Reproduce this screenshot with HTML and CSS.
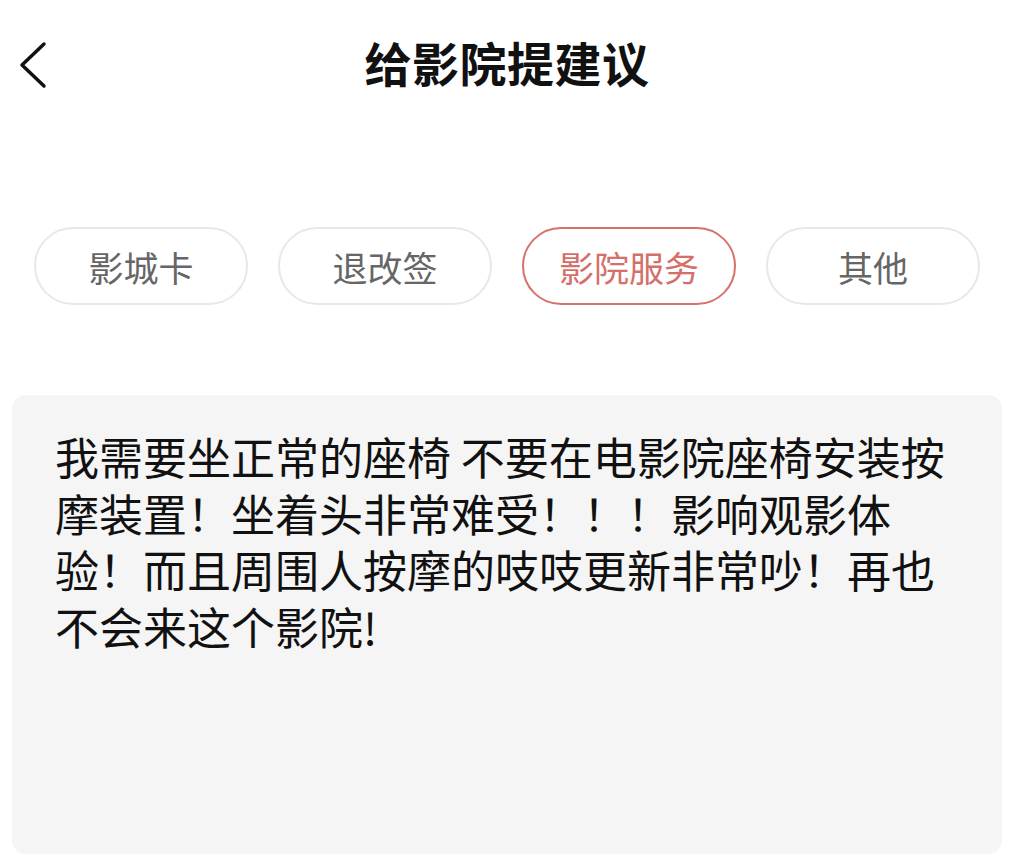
FILE: index.html
```html
<!DOCTYPE html>
<html lang="zh-CN">
<head>
    <meta charset="UTF-8">
    <meta name="viewport" content="width=device-width, initial-scale=1.0">
    <title>给影院提建议</title>
    <link rel="stylesheet" href="styles.css">
</head>
<body>
    <div class="header">
        <button class="back" aria-label="返回">
            <svg width="30" height="48" viewBox="0 0 30 48">
                <path d="M26 3 L4 24 L26 45" fill="none" stroke="#111" stroke-width="3.5" stroke-linecap="round" stroke-linejoin="round"/>
            </svg>
        </button>
        <h1>给影院提建议</h1>
    </div>

    <div class="tags">
        <span class="tag">影城卡</span>
        <span class="tag">退改签</span>
        <span class="tag active">影院服务</span>
        <span class="tag">其他</span>
    </div>

    <div class="feedback">我需要坐正常的座椅 不要在电影院座椅安装按摩装置！坐着头非常难受！！！影响观影体验！而且周围人按摩的吱吱更新非常吵！再也不会来这个影院!</div>
</body>
</html>
```

FILE: styles.css
```css
body, html {
    margin: 0;
    padding: 0;
    background-color: #ffffff;
    font-family: "Noto Sans CJK SC", "Noto Sans", sans-serif;
    color: #111;
}

.header {
    position: relative;
    height: 132px;
    display: flex;
    align-items: center;
    justify-content: center;
}

.header h1 {
    margin: 0 14px 10px 0;
    font-size: 47px;
    font-weight: bold;
    color: #111;
    letter-spacing: 0.5px;
}

.back {
    position: absolute;
    left: 18px;
    top: 41px;
    padding: 0;
    border: none;
    background: none;
}

.back svg {
    display: block;
}

.tags {
    display: flex;
    gap: 30px;
    padding: 0 34px;
    margin-top: 95px;
}

.tag {
    width: 210px;
    height: 74px;
    display: flex;
    align-items: center;
    justify-content: center;
    border: 2px solid #e8e8e8;
    border-radius: 40px;
    font-size: 35px;
    color: #666;
}

.tag.active {
    border-color: #d8716c;
    color: #d46f6a;
}

.feedback {
    margin: 90px 26px 0 12px;
    height: 426px;
    padding: 33px 43px 0 43px;
    background-color: #f5f5f5;
    border-radius: 14px;
    font-size: 44px;
    line-height: 56.5px;
    color: #111;
}
```
